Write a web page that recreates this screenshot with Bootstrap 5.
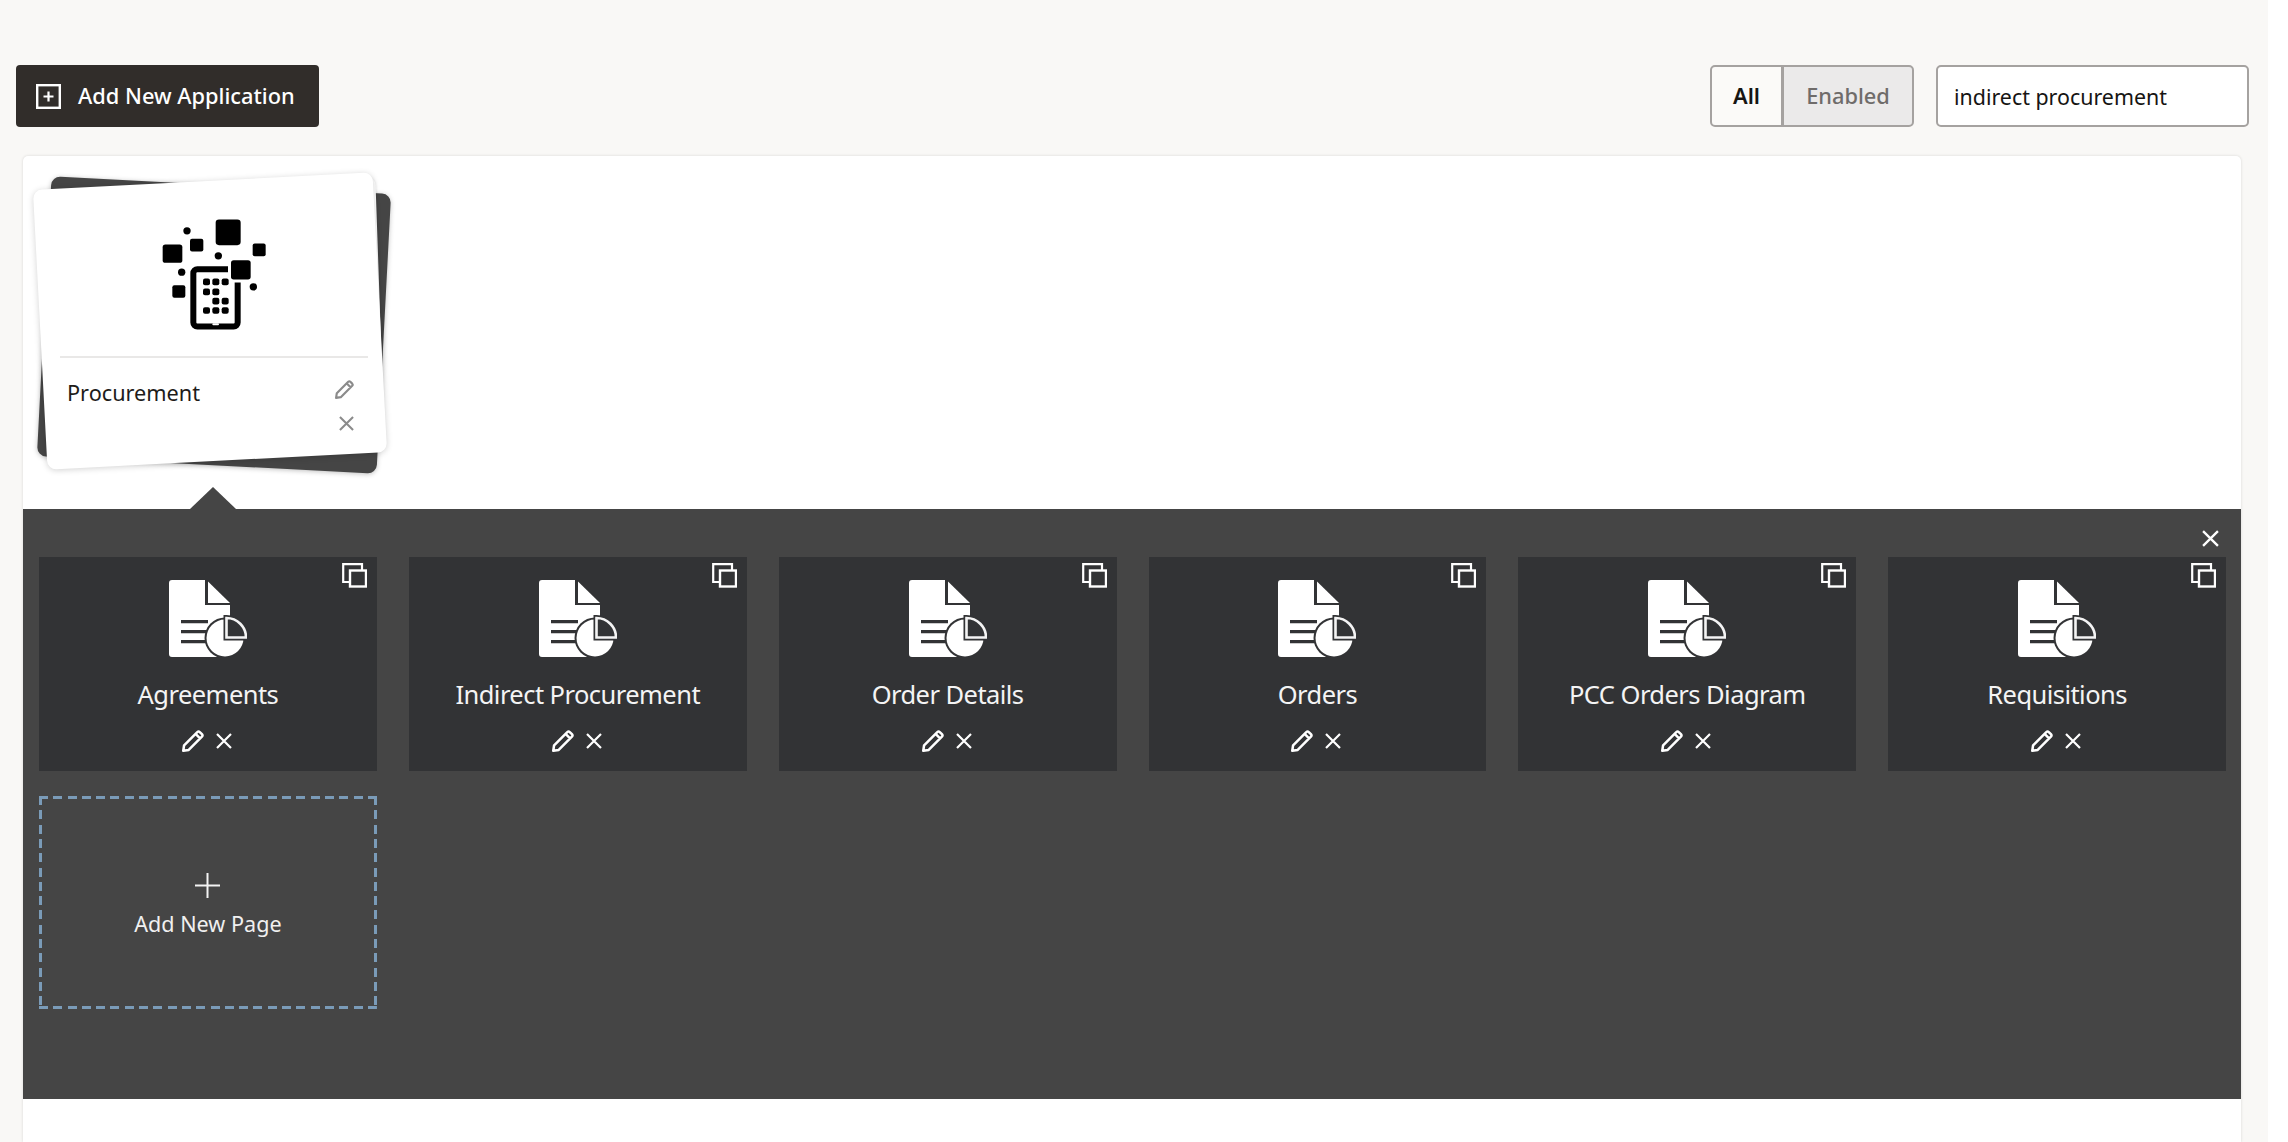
<!DOCTYPE html>
<html lang="en">
<head>
    <meta charset="UTF-8">
    <title>Application Builder</title>
    <link href="https://cdn.jsdelivr.net/npm/bootstrap@5.3.3/dist/css/bootstrap.min.css" rel="stylesheet">
    <style>
        html, body { height: 1142px; overflow: hidden; }
        body { background: #fff; font-family: "Noto Sans", "Open Sans", sans-serif; color: #161513; }
        .page-wrap { width: 2268px; height: 1142px; background: #f9f8f6; padding: 65px 19px 0 16px; }
        .top-bar { height: 62px; margin-bottom: 29px; }
        .add-app-btn { width: 303px; height: 62px; padding: 0 0 0 20px; gap: 17px; background: #312d2a; border: 0; border-radius: 4px; color: #fff; font-size: 21.8px; font-weight: 500; }
        .add-app-btn:hover { background: #312d2a; color: #fff; }
        .view-toggle .btn { height: 62px; padding: 0; font-size: 21.8px; border: 2px solid #a5a2a0; border-radius: 5px; }
        .toggle-all { width: 73px; background: #fbfaf8; color: #161513; font-weight: 600; }
        .toggle-enabled { width: 132px; background: #ebeaea; color: #6f6c6a; font-weight: 500; }
        .search-box { width: 313px; height: 62px; margin-left: 22px; padding: 0 16px; font-size: 21.4px; color: #161513; border: 2px solid #a5a2a0; border-radius: 5px; }
        .app-panel { margin: 0 0 0 7px; width: 2218px; height: 986px; background: #fff; border-radius: 5px 5px 0 0; box-shadow: 0 0 3px rgba(0, 0, 0, .14); }
        .app-area { height: 353px; padding: 25px 0 0 17px; position: relative; }
        .app-card { width: 340px; height: 280px; position: relative; }
        .sheet { position: absolute; border-radius: 9px; width: 340px; height: 280px; left: 0; top: 0; }
        .sheet-dark { background: #454545; transform: translate(4px, 4px) rotate(3deg); box-shadow: 0 1px 5px rgba(0, 0, 0, .25); }
        .sheet-mid { background: #fff; left: 240px; top: -3px; width: 100px; height: 270px; transform: rotate(-2deg); box-shadow: 0 0 3px rgba(0, 0, 0, .12); }
        .sheet-top { background: #fff; transform: rotate(-3deg); box-shadow: 0 1px 6px rgba(0, 0, 0, .18); }
        .app-body { position: relative; height: 100%; padding: 35px 12px 0 20px; }
        .app-logo { display: block; margin: 0 0 23px 100px; }
        .app-rule { height: 2px; background: #e9e8e7; margin-bottom: 19px; }
        .app-name { font-size: 21.7px; line-height: 32px; padding-left: 7px; color: #1e1c1a; }
        .app-tools { color: #8b8b8b; padding: 3px 14px 0 0; gap: 17px; }
        .notch { position: absolute; left: 167px; bottom: 0; width: 46px; height: 22px; background: #454545; clip-path: polygon(50% 0, 100% 100%, 0 100%); }
        .pages-panel { height: 590px; background: #454545; padding: 48px 15px 0 16px; position: relative; color: #fff; }
        .panel-close { position: absolute; top: 21px; right: 22px; }
        .page-grid { display: grid; grid-template-columns: repeat(6, 1fr); column-gap: 32px; row-gap: 25px; }
        .page-tile { position: relative; height: 214px; background: #323335; padding-top: 23px; text-align: center; }
        .tile-copy { position: absolute; top: 6px; right: 10px; }
        .doc-icon { display: block; margin: 0 auto; }
        .tile-name { font-size: 25.5px; line-height: 34px; margin-top: 20px; letter-spacing: -.55px; color: #f4f4f4; }
        .tile-tools { gap: 12px; margin-top: 19px; padding-right: 2px; }
        .add-page { height: 213px; padding-top: 77px; text-align: center;
            background:
                repeating-linear-gradient(90deg, #7a9bb8 0 9px, transparent 9px 14.3px) top / 100% 3px no-repeat,
                repeating-linear-gradient(90deg, #7a9bb8 0 9px, transparent 9px 14.3px) bottom / 100% 3px no-repeat,
                repeating-linear-gradient(180deg, #7a9bb8 0 9px, transparent 9px 14.3px) left / 3px 100% no-repeat,
                repeating-linear-gradient(180deg, #7a9bb8 0 9px, transparent 9px 14.3px) right / 3px 100% no-repeat; }
        .add-page-label { font-size: 21.6px; line-height: 30px; margin-top: 11px; color: #f0f0f0; }
    </style>
</head>
<body>
<svg width="0" height="0" class="d-block position-absolute">
    <symbol id="i-pencil" viewBox="0 0 21 21">
        <path d="M1.2 19.8 2 14.6 14.6 2Q15.8.9 17 2L19 4Q20.1 5.2 19 6.4L6.4 19Z M13 3.8 17.2 8" fill="none" stroke="currentColor" stroke-width="2.4" stroke-linejoin="round"/>
    </symbol>
    <symbol id="i-close" viewBox="0 0 16 16">
        <path d="M1 1 15 15M15 1 1 15" fill="none" stroke="currentColor" stroke-width="2.2"/>
    </symbol>
    <symbol id="i-copy" viewBox="0 0 25 25">
        <path d="M7 19H1.2V1.2H20V7" fill="none" stroke="currentColor" stroke-width="2.2"/>
        <rect x="8" y="7.5" width="16" height="16" fill="none" stroke="currentColor" stroke-width="2.4"/>
    </symbol>
    <symbol id="i-doc" viewBox="0 0 78 77">
        <path d="M3 0H36V25H61V77H3Q0 77 0 74V3Q0 0 3 0Z" fill="#fff"/>
        <path d="M39 1.5 61 23H39Z" fill="#fff"/>
        <path d="M12 41.7H39M12 51.7H39M12 61.7H39" stroke="#323335" stroke-width="3.2"/>
        <circle cx="56" cy="58" r="20.5" fill="#323335"/>
        <circle cx="56" cy="58" r="18.5" fill="#fff"/>
        <path d="M57.5 38A19.5 19.5 0 0 1 77 57.5H57.5Z" fill="#323335" stroke="#323335" stroke-width="6"/>
        <path d="M57.5 38A19.5 19.5 0 0 1 77 57.5H57.5Z" fill="#323335" stroke="#f4f4f4" stroke-width="2.6"/>
    </symbol>
</svg>

<div class="page-wrap">
    <div class="top-bar d-flex justify-content-between align-items-center">
        <button type="button" class="btn add-app-btn d-flex align-items-center">
            <svg width="25" height="25" viewBox="0 0 25 25"><rect x="1.2" y="1.2" width="22.6" height="22.6" fill="none" stroke="#fff" stroke-width="2.4"/><path d="M12.5 7.5V17.5M7.5 12.5H17.5" stroke="#fff" stroke-width="2.2"/></svg>
            <span>Add New Application</span>
        </button>
        <div class="d-flex">
            <div class="btn-group view-toggle" role="group">
                <button type="button" class="btn toggle-all">All</button>
                <button type="button" class="btn toggle-enabled">Enabled</button>
            </div>
            <input type="text" class="form-control search-box" value="indirect procurement">
        </div>
    </div>

    <div class="app-panel">
        <div class="app-area">
            <div class="app-card">
                <div class="sheet sheet-dark"></div>
                <div class="sheet sheet-mid"></div>
                <div class="sheet sheet-top"></div>
                <div class="app-body">
                    <svg class="app-logo" width="110" height="117" viewBox="480 530 330 350">
                        <rect x="647" y="540" width="75" height="77" rx="10"/>
                        <rect x="570" y="598" width="40" height="38" rx="6"/>
                        <rect x="488" y="615" width="59" height="55" rx="8"/>
                        <rect x="758" y="612" width="39" height="38" rx="6"/>
                        <rect x="517" y="737" width="39" height="38" rx="6"/>
                        <circle cx="561" cy="574" r="11"/>
                        <circle cx="655" cy="649" r="11"/>
                        <circle cx="545" cy="698" r="11"/>
                        <circle cx="760" cy="742" r="11"/>
                        <rect x="580" y="689" width="133" height="172" rx="12" fill="#fff" stroke="#000" stroke-width="18"/>
                        <rect x="637" y="851" width="20" height="6" rx="3" fill="#fff"/>
                        <rect x="684" y="653" width="77" height="76" rx="10" fill="#fff"/>
                        <rect x="693" y="662" width="59" height="58" rx="8"/>
                        <g>
                            <rect x="609" y="717" width="21" height="20" rx="6"/><rect x="637" y="717" width="21" height="20" rx="6"/><rect x="665" y="717" width="21" height="20" rx="6"/>
                            <rect x="609" y="747" width="21" height="20" rx="6"/><rect x="637" y="747" width="21" height="20" rx="6"/>
                            <rect x="637" y="775" width="21" height="20" rx="6"/><rect x="665" y="775" width="21" height="20" rx="6"/>
                            <rect x="609" y="803" width="21" height="20" rx="6"/><rect x="637" y="803" width="21" height="20" rx="6"/><rect x="665" y="803" width="21" height="20" rx="6"/>
                        </g>
                    </svg>
                    <div class="app-rule"></div>
                    <div class="d-flex justify-content-between">
                        <div class="app-name">Procurement</div>
                        <div class="app-tools d-flex flex-column align-items-end">
                            <svg width="19" height="19"><use href="#i-pencil"/></svg>
                            <svg width="15" height="15"><use href="#i-close"/></svg>
                        </div>
                    </div>
                </div>
            </div>
            <div class="notch"></div>
        </div>

        <div class="pages-panel">
            <svg class="panel-close" width="17" height="17"><use href="#i-close"/></svg>
            <div class="page-grid">
                <div class="page-tile">
                    <svg class="tile-copy" width="25" height="25"><use href="#i-copy"/></svg>
                    <svg class="doc-icon" width="78" height="77"><use href="#i-doc"/></svg>
                    <div class="tile-name">Agreements</div>
                    <div class="tile-tools d-flex justify-content-center align-items-center">
                        <svg width="22" height="22"><use href="#i-pencil"/></svg>
                        <svg width="16" height="16"><use href="#i-close"/></svg>
                    </div>
                </div>
                <div class="page-tile">
                    <svg class="tile-copy" width="25" height="25"><use href="#i-copy"/></svg>
                    <svg class="doc-icon" width="78" height="77"><use href="#i-doc"/></svg>
                    <div class="tile-name">Indirect Procurement</div>
                    <div class="tile-tools d-flex justify-content-center align-items-center">
                        <svg width="22" height="22"><use href="#i-pencil"/></svg>
                        <svg width="16" height="16"><use href="#i-close"/></svg>
                    </div>
                </div>
                <div class="page-tile">
                    <svg class="tile-copy" width="25" height="25"><use href="#i-copy"/></svg>
                    <svg class="doc-icon" width="78" height="77"><use href="#i-doc"/></svg>
                    <div class="tile-name">Order Details</div>
                    <div class="tile-tools d-flex justify-content-center align-items-center">
                        <svg width="22" height="22"><use href="#i-pencil"/></svg>
                        <svg width="16" height="16"><use href="#i-close"/></svg>
                    </div>
                </div>
                <div class="page-tile">
                    <svg class="tile-copy" width="25" height="25"><use href="#i-copy"/></svg>
                    <svg class="doc-icon" width="78" height="77"><use href="#i-doc"/></svg>
                    <div class="tile-name">Orders</div>
                    <div class="tile-tools d-flex justify-content-center align-items-center">
                        <svg width="22" height="22"><use href="#i-pencil"/></svg>
                        <svg width="16" height="16"><use href="#i-close"/></svg>
                    </div>
                </div>
                <div class="page-tile">
                    <svg class="tile-copy" width="25" height="25"><use href="#i-copy"/></svg>
                    <svg class="doc-icon" width="78" height="77"><use href="#i-doc"/></svg>
                    <div class="tile-name">PCC Orders Diagram</div>
                    <div class="tile-tools d-flex justify-content-center align-items-center">
                        <svg width="22" height="22"><use href="#i-pencil"/></svg>
                        <svg width="16" height="16"><use href="#i-close"/></svg>
                    </div>
                </div>
                <div class="page-tile">
                    <svg class="tile-copy" width="25" height="25"><use href="#i-copy"/></svg>
                    <svg class="doc-icon" width="78" height="77"><use href="#i-doc"/></svg>
                    <div class="tile-name">Requisitions</div>
                    <div class="tile-tools d-flex justify-content-center align-items-center">
                        <svg width="22" height="22"><use href="#i-pencil"/></svg>
                        <svg width="16" height="16"><use href="#i-close"/></svg>
                    </div>
                </div>
                <div class="add-page">
                    <svg class="d-block mx-auto" width="25" height="25" viewBox="0 0 25 25"><path d="M12.5 0V25M0 12.5H25" stroke="#f4f4f4" stroke-width="2"/></svg>
                    <div class="add-page-label">Add New Page</div>
                </div>
            </div>
        </div>
    </div>
</div>
<script src="https://cdn.jsdelivr.net/npm/bootstrap@5.3.3/dist/js/bootstrap.bundle.min.js"></script>
</body>
</html>
